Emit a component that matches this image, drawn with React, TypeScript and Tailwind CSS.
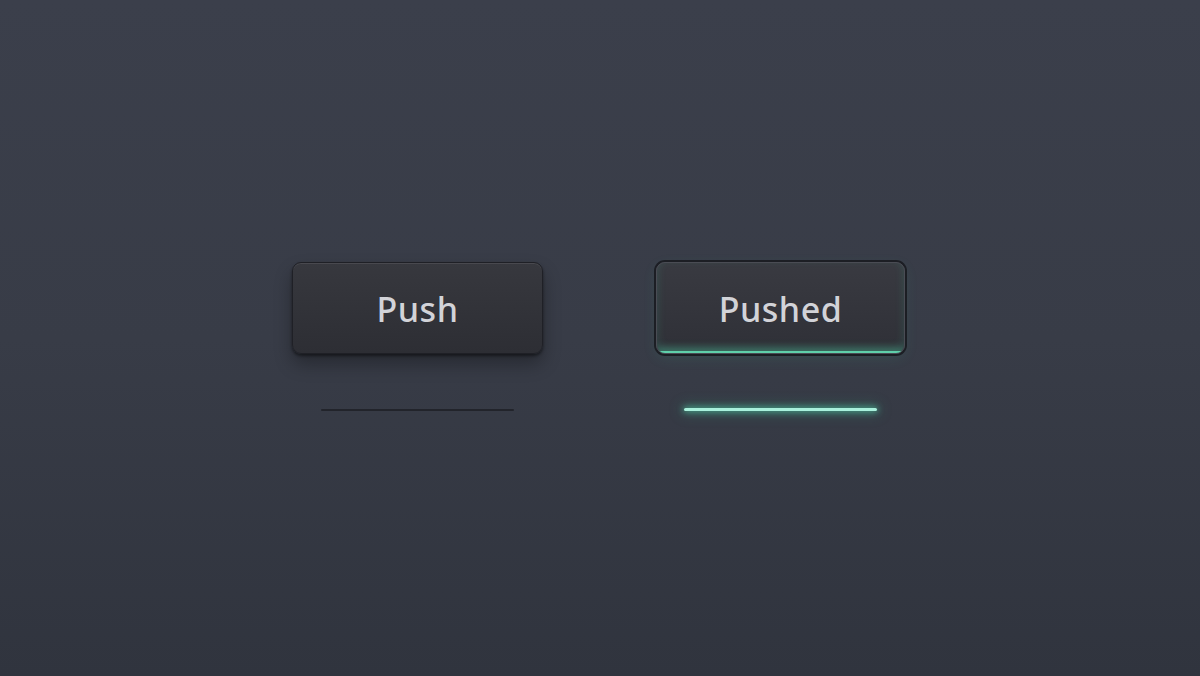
export default function App() {
  return (
    <div
      className="w-[1200px] h-[676px] bg-gradient-to-b from-[#3b3f4b] via-[#383c47] to-[#30343e] flex gap-[113px] pl-[292px] pt-[262px]"
      style={{fontFamily: '"Noto Sans", "Open Sans", sans-serif'}}
    >
      {/* Idle button */}
      <div className="flex flex-col items-center">
        <button className="w-[251px] h-[92px] rounded-[9px] bg-gradient-to-b from-[#37383e] to-[#2d2e34] border border-[#1f2026] shadow-[inset_0_1px_0_rgba(255,255,255,0.09),0_10px_18px_rgba(0,0,0,0.3),0_2px_3px_rgba(0,0,0,0.45)] text-[34px] font-medium text-[#d2d3d8] tracking-[0.5px] pt-[3px]">
          Push
        </button>
        <div className="mt-[55px] w-[193px] h-[2px] bg-[#22242b] rounded-full" />
      </div>

      {/* Active button */}
      <div className="flex flex-col items-center">
        <button className="relative w-[249px] h-[92px] rounded-[9px] bg-gradient-to-b from-[#393a41] to-[#2f3037] border border-[#4a4c54] shadow-[0_0_0_2px_#1c1e24,inset_0_-4px_10px_rgba(72,200,160,0.18),0_4px_14px_rgba(60,190,150,0.12)] text-[34px] font-medium text-[#d2d3d8] tracking-[0.5px] pt-[3px] overflow-hidden">
          Pushed
          <span className="absolute left-[2px] right-[2px] bottom-0 h-[2px] bg-[#5fcfaa] shadow-[0_0_8px_2px_rgba(80,200,160,0.55)]" />
        </button>
        <div className="mt-[54px] w-[193px] h-[3px] bg-[#a9f0dc] rounded-full shadow-[0_0_6px_1px_rgba(80,210,170,0.7),0_0_14px_3px_rgba(60,180,140,0.25)]" />
      </div>
    </div>
  );
}
